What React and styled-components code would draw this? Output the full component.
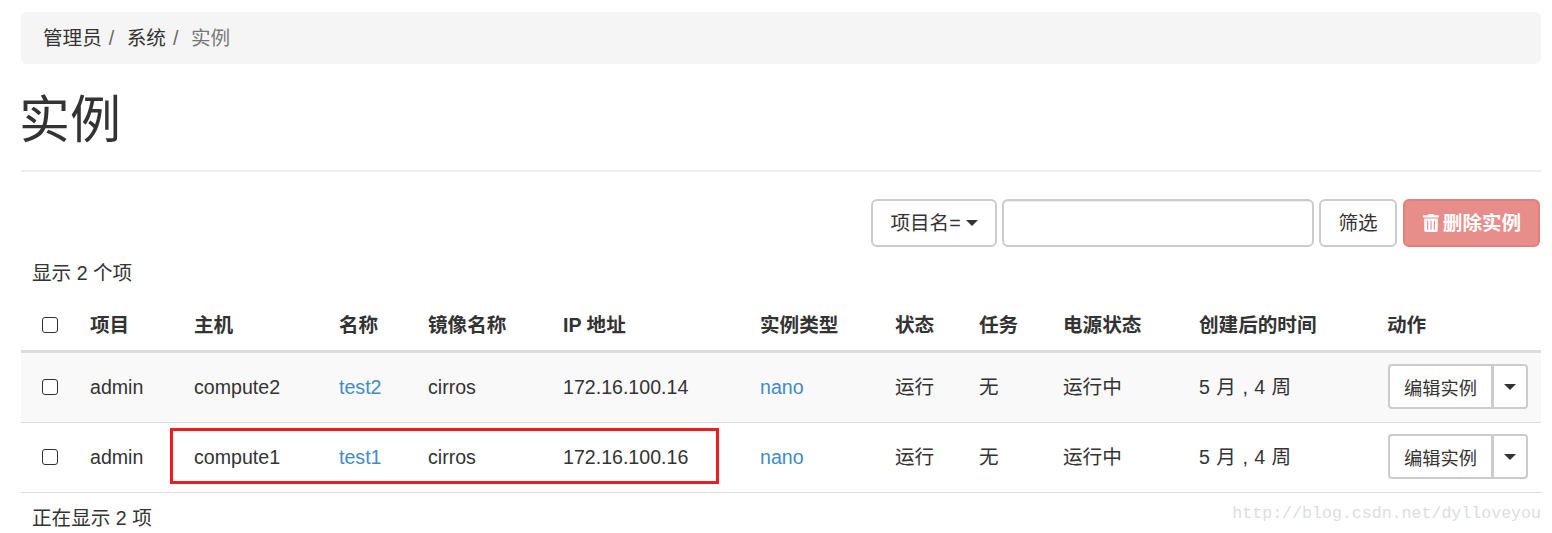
import React from "react";
import styled, { createGlobalStyle } from "styled-components";
import { FaTrashAlt } from "react-icons/fa";

const GlobalStyle = createGlobalStyle`
  html, body {
    margin: 0;
    background: #fff;
  }
  body {
    font-family: "Liberation Sans", "Noto Sans CJK SC", sans-serif;
    font-size: 19.6px;
    line-height: 28px;
    color: #333;
  }
`;

const rows = [
  { host: "compute2", name: "test2", ip: "172.16.100.14" },
  { host: "compute1", name: "test1", ip: "172.16.100.16" },
];

const columns = [58, 104, 145, 89, 135, 197, 135, 84, 84, 136, 188, 165];
const headers = ["项目", "主机", "名称", "镜像名称", "IP 地址", "实例类型", "状态", "任务", "电源状态", "创建后的时间", "动作"];

function App() {
  return (
    <Page>
      <GlobalStyle />
      <Breadcrumb>
        <Crumb>管理员</Crumb>
        <Crumb>系统</Crumb>
        <Crumb $active>实例</Crumb>
      </Breadcrumb>
      <Heading>实例</Heading>
      <Toolbar>
        <Button $wide>
          项目名= <Caret />
        </Button>
        <SearchInput type="text" />
        <Button>筛选</Button>
        <DangerButton>
          <FaTrashAlt size={18} /> 删除实例
        </DangerButton>
      </Toolbar>
      <Summary>显示 2 个项</Summary>
      <Table>
        <colgroup>
          {columns.map((w, i) => (
            <col key={i} style={{ width: w }} />
          ))}
        </colgroup>
        <thead>
          <tr>
            <HeadCell>
              <Check />
            </HeadCell>
            {headers.map((h) => (
              <HeadCell key={h}>{h}</HeadCell>
            ))}
          </tr>
        </thead>
        <tbody>
          {rows.map((row, i) => (
            <Row key={row.host} $striped={i === 0}>
              <Cell>
                <Check />
              </Cell>
              <Cell>admin</Cell>
              <Cell>{row.host}</Cell>
              <Cell>
                <Link>{row.name}</Link>
              </Cell>
              <Cell>cirros</Cell>
              <Cell>{row.ip}</Cell>
              <Cell>
                <Link>nano</Link>
              </Cell>
              <Cell>运行</Cell>
              <Cell>无</Cell>
              <Cell>运行中</Cell>
              <Cell>
                <Age>5 月 , 4 周</Age>
              </Cell>
              <Cell>
                <ButtonGroup>
                  <GroupButton>编辑实例</GroupButton>
                  <GroupCaret>
                    <Caret />
                  </GroupCaret>
                </ButtonGroup>
              </Cell>
            </Row>
          ))}
        </tbody>
      </Table>
      <Footer>正在显示 2 项</Footer>
      <Highlight />
      <Watermark>http://blog.csdn.net/dylloveyou</Watermark>
    </Page>
  );
}

const Page = styled.div`
  position: relative;
  box-sizing: border-box;
  width: 1552px;
  height: 533px;
  padding: 12px 11px 0 21px;
  overflow: hidden;
`;

const Breadcrumb = styled.ol`
  display: flex;
  align-items: center;
  height: 52px;
  margin: 0;
  padding: 0 22px;
  list-style: none;
  background: #f5f5f5;
  border-radius: 6px;
`;

const Crumb = styled.li`
  color: ${(p) => (p.$active ? "#777" : "#333")};
  &:not(:last-child)::after {
    content: "/";
    padding: 0 7px;
    color: #666;
  }
  &:not(:last-child) {
    margin-right: 5.5px;
  }
`;

const Heading = styled.h1`
  box-sizing: border-box;
  height: 108px;
  margin: 0;
  padding-top: 29px;
  font-size: 51px;
  font-weight: 400;
  line-height: 56px;
  text-indent: -2px;
  color: #333;
  border-bottom: 2px solid #eee;
`;

const Toolbar = styled.div`
  display: flex;
  justify-content: flex-end;
  gap: 5px;
  height: 48px;
  margin-top: 27px;
  padding-right: 1px;
`;

const Button = styled.button`
  box-sizing: border-box;
  display: flex;
  align-items: center;
  justify-content: center;
  gap: 5px;
  width: ${(p) => (p.$wide ? "126px" : "78px")};
  height: 48px;
  padding: 0;
  font: inherit;
  color: #333;
  background: #fff;
  border: 2px solid #ccc;
  border-radius: 6px;
`;

const DangerButton = styled(Button)`
  width: 137px;
  margin-left: 1px;
  gap: 3px;
  font-weight: 700;
  color: #fff;
  background: #e78d8a;
  border-color: #e27e7b;
`;

const SearchInput = styled.input`
  box-sizing: border-box;
  width: 312px;
  height: 48px;
  padding: 0;
  background: #fff;
  border: 2px solid #ccc;
  border-radius: 6px;
  box-shadow: inset 0 1px 1px rgba(0, 0, 0, 0.075);
`;

const Caret = styled.span`
  display: inline-block;
  width: 0;
  height: 0;
  border-top: 6px solid #333;
  border-left: 6px solid transparent;
  border-right: 6px solid transparent;
`;

const Summary = styled.div`
  height: 28px;
  margin-top: 12px;
  padding-left: 11px;
`;

const Table = styled.table`
  width: 1520px;
  margin-top: 13px;
  table-layout: fixed;
  border-collapse: separate;
  border-spacing: 0;
`;

const HeadCell = styled.th`
  box-sizing: border-box;
  height: 53px;
  padding: 0 11px;
  font-weight: 700;
  text-align: left;
  border-bottom: 3px solid #ddd;
  &:first-child {
    padding: 0 0 0 21px;
  }
`;

const Row = styled.tr`
  background: ${(p) => (p.$striped ? "#f9f9f9" : "#fff")};
`;

const Cell = styled.td`
  box-sizing: border-box;
  height: 70px;
  padding: 0 11px 2px;
  border-bottom: 1px solid #ddd;
  &:first-child {
    padding: 0 0 2px 21px;
  }
`;

const Age = styled.span`
  word-spacing: 1px;
`;

const Check = styled.span`
  display: block;
  box-sizing: border-box;
  width: 16px;
  height: 16px;
  background: #fff;
  border: 1.5px solid #333;
  border-radius: 3px;
`;

const Link = styled.a`
  color: #428bca;
`;

const ButtonGroup = styled.div`
  display: inline-flex;
  height: 45px;
  margin-left: 1px;
  vertical-align: middle;
`;

const GroupButton = styled.button`
  box-sizing: border-box;
  width: 105px;
  height: 45px;
  padding: 0;
  font-family: inherit;
  font-size: 18.2px;
  color: #333;
  background: #fff;
  border: 2px solid #ccc;
  border-radius: 4px 0 0 4px;
`;

const GroupCaret = styled.button`
  box-sizing: border-box;
  display: flex;
  align-items: center;
  justify-content: center;
  width: 36px;
  height: 45px;
  margin-left: -1px;
  padding: 0;
  background: #fff;
  border: 2px solid #ccc;
  border-radius: 0 4px 4px 0;
`;

const Footer = styled.div`
  margin-top: 11px;
  padding-left: 11px;
`;

const Highlight = styled.div`
  position: absolute;
  left: 170px;
  top: 428px;
  box-sizing: border-box;
  width: 549px;
  height: 56px;
  border: 3px solid #ed1c24;
`;

const Watermark = styled.div`
  position: absolute;
  right: 11px;
  top: 501px;
  font-family: "Liberation Mono", monospace;
  font-size: 16.6px;
  line-height: 26px;
  color: #ddd;
`;

export default App;
